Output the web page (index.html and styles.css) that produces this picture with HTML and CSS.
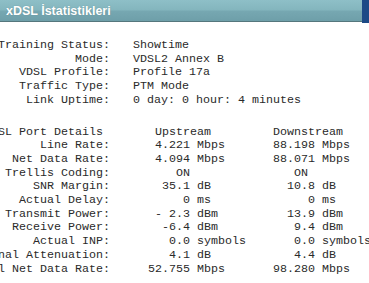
FILE: index.html
```html
<!DOCTYPE html>
<html>
<head>
<meta http-equiv="Content-Type" content="text/html; charset=UTF-8">
<title>xDSL İstatistikleri</title>
<link rel="stylesheet" href="styles.css">
</head>
<body>
	<div class="page">
		<div class="titlebar">
			<span class="title">xDSL İstatistikleri</span>
			<span class="edge"></span>
		</div>

		<div class="summary">
			<div class="label">Training Status:</div><div class="value">Showtime</div>
			<div class="label">Mode:</div><div class="value">VDSL2 Annex B</div>
			<div class="label">VDSL Profile:</div><div class="value">Profile 17a</div>
			<div class="label">Traffic Type:</div><div class="value">PTM Mode</div>
			<div class="label">Link Uptime:</div><div class="value">0 day: 0 hour: 4 minutes</div>
		</div>

		<div class="details">
			<div class="label head">xDSL Port Details</div><div class="value"> Upstream</div><div class="value">Downstream</div>
			<div class="label">Line Rate:</div><div class="value"> 4.221 Mbps</div><div class="value">88.198 Mbps</div>
			<div class="label">Net Data Rate:</div><div class="value"> 4.094 Mbps</div><div class="value">88.071 Mbps</div>
			<div class="label">Trellis Coding:</div><div class="value">    ON</div><div class="value">   ON</div>
			<div class="label">SNR Margin:</div><div class="value">  35.1 dB</div><div class="value">  10.8 dB</div>
			<div class="label">Actual Delay:</div><div class="value">     0 ms</div><div class="value">     0 ms</div>
			<div class="label">Transmit Power:</div><div class="value"> - 2.3 dBm</div><div class="value">  13.9 dBm</div>
			<div class="label">Receive Power:</div><div class="value">  -6.4 dBm</div><div class="value">   9.4 dBm</div>
			<div class="label">Actual INP:</div><div class="value">   0.0 symbols</div><div class="value">   0.0 symbols</div>
			<div class="label">Signal Attenuation:</div><div class="value">   4.1 dB</div><div class="value">   4.4 dB</div>
			<div class="label">Total Net Data Rate:</div><div class="value">52.755 Mbps</div><div class="value">98.280 Mbps</div>
		</div>
	</div>
</body>
</html>
```

FILE: styles.css
```css
body {
	margin: 0;
	background-color: #ffffff;
	font-family: "Liberation Mono", "Courier New", monospace;
	font-size: 11.667px;
	color: #2a2a2a;
}

.page {
	width: 369px;
	height: 283px;
	overflow: hidden;
}

.titlebar {
	height: 21px;
	display: flex;
	align-items: center;
	justify-content: space-between;
	background: linear-gradient(#8ebfc7, #84b6be 45%, #76a7b1 55%, #6e9fa9);
	border-bottom: 1px solid #55777d;
}
.title {
	padding-left: 6px;
	font-family: "Liberation Sans", Arial, sans-serif;
	font-weight: bold;
	font-size: 12.5px;
	color: #ffffff;
	text-shadow: 0 0 1px #5a8890;
}
.edge {
	align-self: flex-start;
	width: 7px;
	height: 23px;
	background-color: #1d4a86;
}

.summary,
.details {
	display: grid;
	line-height: 13.7px;
	margin-left: -40px;
}
.summary {
	margin-top: 17px;
	grid-template-columns: 173px auto;
}
.details {
	margin-top: 18px;
	grid-template-columns: 188px 125px auto;
}

.label {
	text-align: right;
	white-space: pre;
}
.summary .label {
	padding-right: 23px;
}
.details .label {
	padding-right: 38px;
}
.details .head {
	text-align: left;
	padding-left: 24px;
}
.value {
	white-space: pre;
}
```
